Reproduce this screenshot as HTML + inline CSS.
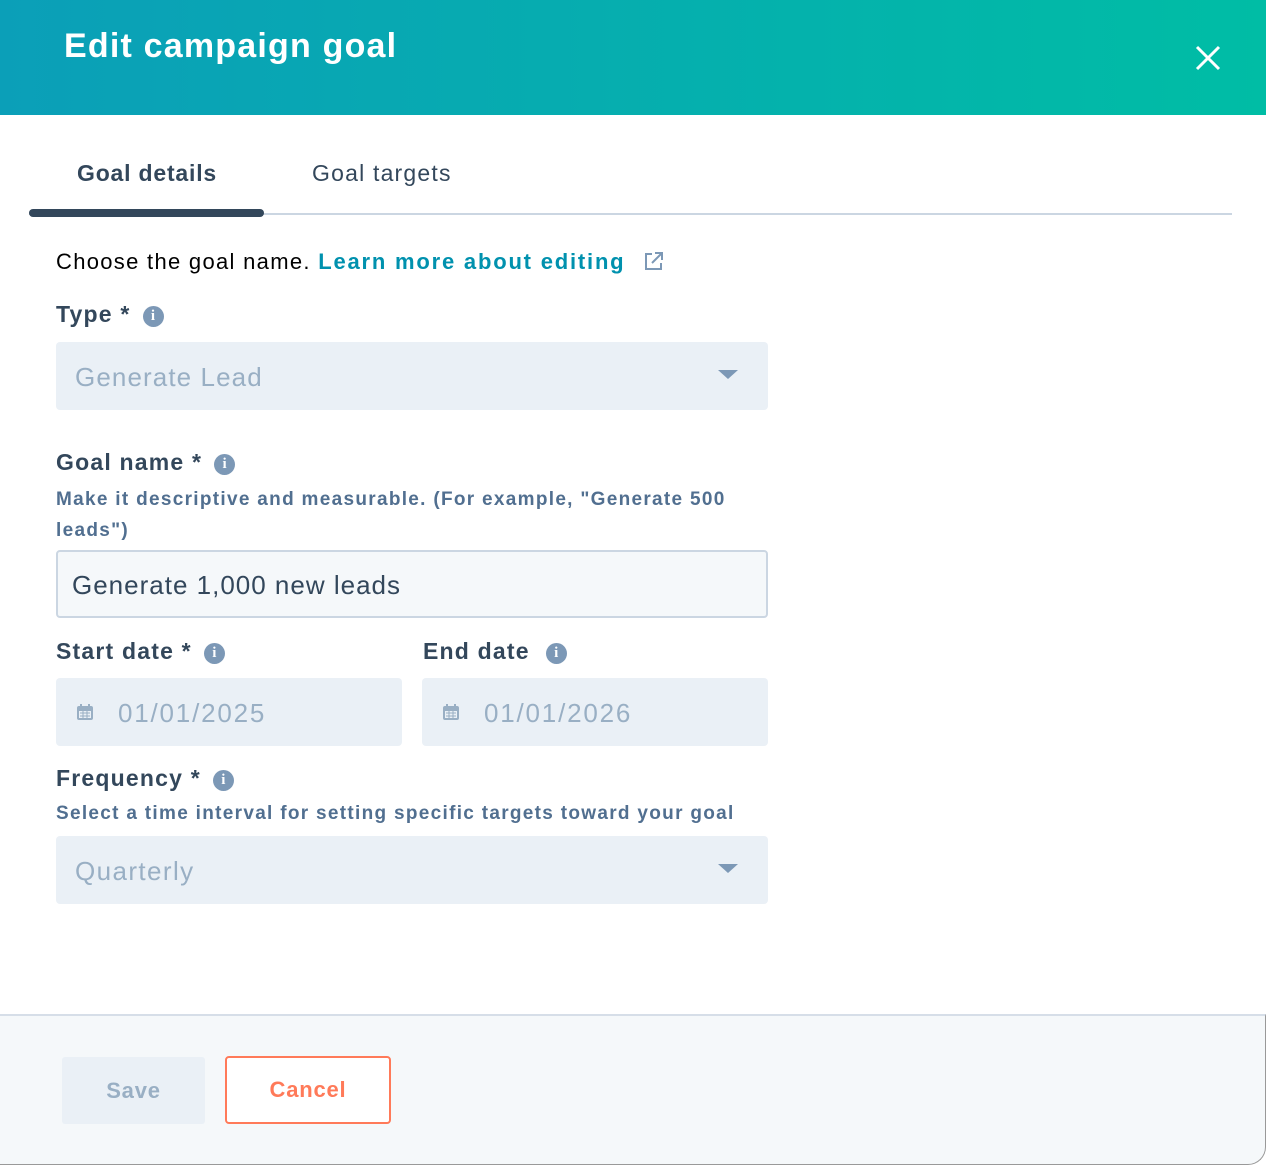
<!DOCTYPE html>
<html><head><style>
*{margin:0;padding:0;box-sizing:border-box}
body{width:1266px;height:1165px;background:#fff;font-family:"Liberation Sans",sans-serif;position:relative;overflow:hidden;color:#33475b}
.a{position:absolute;white-space:nowrap}
.hdr{position:absolute;left:0;top:0;width:1266px;height:115px;background:linear-gradient(90deg,#0b9fb8,#00bda5)}
.lbl{font-weight:bold;font-size:23px;color:#33475b;letter-spacing:1.2px}
.info{display:inline-block;width:21px;height:21px;border-radius:50%;background:#7c98b6;color:#fff;font-size:15px;font-weight:bold;text-align:center;line-height:21px;font-family:"Liberation Serif",serif;vertical-align:2px;margin-left:12px;letter-spacing:0}
.box{position:absolute;background:#eaf0f6;border-radius:4px}
.ph{position:absolute;font-size:26px;color:#99afc4}
.help{font-size:19px;font-weight:bold;color:#516f90;letter-spacing:1.3px}
.car{position:absolute;width:0;height:0;border-left:10px solid transparent;border-right:10px solid transparent;border-top:9px solid #7c98b6}
</style></head><body>
<div class="hdr"></div>
<div class="a" style="left:64px;top:27px;font-size:34px;font-weight:bold;color:#fff;letter-spacing:1.2px">Edit campaign goal</div>
<svg class="a" style="left:1194px;top:44px" width="28" height="28"><path d="M3 3L25 25M25 3L3 25" stroke="#fff" stroke-width="3"/></svg>
<div class="a" style="left:77px;top:160px;font-size:23px;font-weight:bold;color:#33475b;letter-spacing:0.8px">Goal details</div>
<div class="a" style="left:312px;top:160px;font-size:23px;color:#33475b;letter-spacing:1.2px">Goal targets</div>
<div class="a" style="left:29px;top:213px;width:1203px;height:2px;background:#cbd6e2"></div>
<div class="a" style="left:29px;top:209px;width:235px;height:8px;border-radius:4px;background:#33475b"></div>
<div class="a" style="left:56px;top:249px;font-size:22px;color:#000;letter-spacing:1.3px">Choose the goal name. <span style="color:#0091ae;font-weight:bold;letter-spacing:1.8px">Learn more about editing</span></div>
<svg class="a" style="left:643px;top:250px" width="22" height="22"><path d="M9 4H3v15h15v-6M12 3h7v7M19 3L9 13" stroke="#7c98b6" stroke-width="2" fill="none"/></svg>
<div class="a lbl" style="left:56px;top:301px">Type *<span class="info">i</span></div>
<div class="box" style="left:56px;top:342px;width:712px;height:68px"></div>
<div class="ph" style="left:75px;top:362px;letter-spacing:1.1px">Generate Lead</div>
<div class="car" style="left:718px;top:370px"></div>
<div class="a lbl" style="left:56px;top:449px">Goal name *<span class="info">i</span></div>
<div class="a help" style="left:56px;top:484px;line-height:31px">Make it descriptive and measurable. (For example, "Generate 500<br>leads")</div>
<div class="a" style="left:56px;top:550px;width:712px;height:68px;background:#f5f8fa;border:2px solid #cbd6e2;border-radius:4px"></div>
<div class="a" style="left:72px;top:570px;font-size:26px;color:#33475b;letter-spacing:1px">Generate 1,000 new leads</div>
<div class="a lbl" style="left:56px;top:638px">Start date *<span class="info">i</span></div>
<div class="a lbl" style="left:423px;top:638px">End date<span class="info" style="margin-left:16px">i</span></div>
<div class="box" style="left:56px;top:678px;width:346px;height:68px"></div>
<div class="box" style="left:422px;top:678px;width:346px;height:68px"></div>
<svg class="a" style="left:75px;top:702px" width="20" height="20"><rect x="2" y="4" width="16" height="14" rx="2" fill="#99afc4"/><rect x="4" y="9" width="12" height="7" fill="#eaf0f6"/><path d="M6 2v4M14 2v4" stroke="#99afc4" stroke-width="2"/><path d="M5 11h10M5 14h10M8 9v7M12 9v7" stroke="#99afc4" stroke-width="1"/></svg>
<svg class="a" style="left:441px;top:702px" width="20" height="20"><rect x="2" y="4" width="16" height="14" rx="2" fill="#99afc4"/><rect x="4" y="9" width="12" height="7" fill="#eaf0f6"/><path d="M6 2v4M14 2v4" stroke="#99afc4" stroke-width="2"/><path d="M5 11h10M5 14h10M8 9v7M12 9v7" stroke="#99afc4" stroke-width="1"/></svg>
<div class="ph" style="left:118px;top:698px;letter-spacing:1.8px">01/01/2025</div>
<div class="ph" style="left:484px;top:698px;letter-spacing:1.8px">01/01/2026</div>
<div class="a lbl" style="left:56px;top:765px">Frequency *<span class="info">i</span></div>
<div class="a help" style="left:56px;top:803px">Select a time interval for setting specific targets toward your goal</div>
<div class="box" style="left:56px;top:836px;width:712px;height:68px"></div>
<div class="ph" style="left:75px;top:856px;letter-spacing:1.4px">Quarterly</div>
<div class="car" style="left:718px;top:864px"></div>
<div class="a" style="left:0;top:1014px;width:1266px;height:151px;background:#f5f8fa;border-top:2px solid #d6dee8;border-bottom-right-radius:18px;border-right:1px solid #999;border-bottom:1px solid #999"></div>
<div class="a" style="left:62px;top:1057px;width:143px;height:67px;background:#eaf0f6;border-radius:3px;text-align:center;line-height:67px;font-size:22px;font-weight:bold;color:#99afc4;letter-spacing:0.8px">Save</div>
<div class="a" style="left:225px;top:1056px;width:166px;height:68px;background:#fff;border:2px solid #ff7a59;border-radius:4px;text-align:center;line-height:64px;font-size:22px;font-weight:bold;color:#ff7a59;letter-spacing:0.8px">Cancel</div>
</body></html>
